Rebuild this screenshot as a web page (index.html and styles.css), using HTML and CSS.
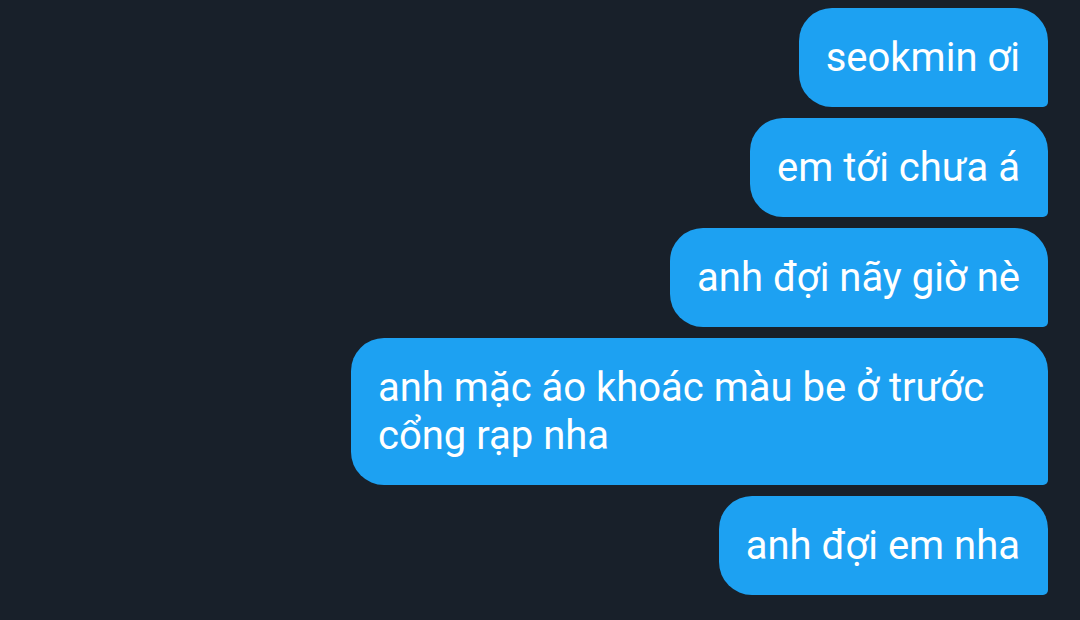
FILE: index.html
```html
<!DOCTYPE html>
<html lang="vi">
<head>
<meta charset="utf-8">
<link rel="stylesheet" href="styles.css">
</head>
<body>
<div class="chat">
  <div class="bubble">seokmin ơi</div>
  <div class="bubble">em tới chưa á</div>
  <div class="bubble">anh đợi nãy giờ nè</div>
  <div class="bubble">anh mặc áo khoác màu be ở trước cổng rạp nha</div>
  <div class="bubble">anh đợi em nha</div>
</div>
</body>
</html>
```
FILE: styles.css
```css
html, body {
  margin: 0;
  padding: 0;
  background: #18202a;
  width: 1080px;
  height: 620px;
  overflow: hidden;
}
.chat {
  display: flex;
  flex-direction: column;
  align-items: flex-end;
  gap: 11px;
  padding: 8px 32px 0 0;
}
.bubble {
  box-sizing: border-box;
  max-width: 697px;
  background: #1da1f2;
  color: #ffffff;
  font-family: Roboto, "Noto Sans", sans-serif;
  font-size: 40px;
  line-height: 48px;
  padding: 26px 28px 25px 27px;
  border-radius: 33px 33px 5px 33px;
}
```
